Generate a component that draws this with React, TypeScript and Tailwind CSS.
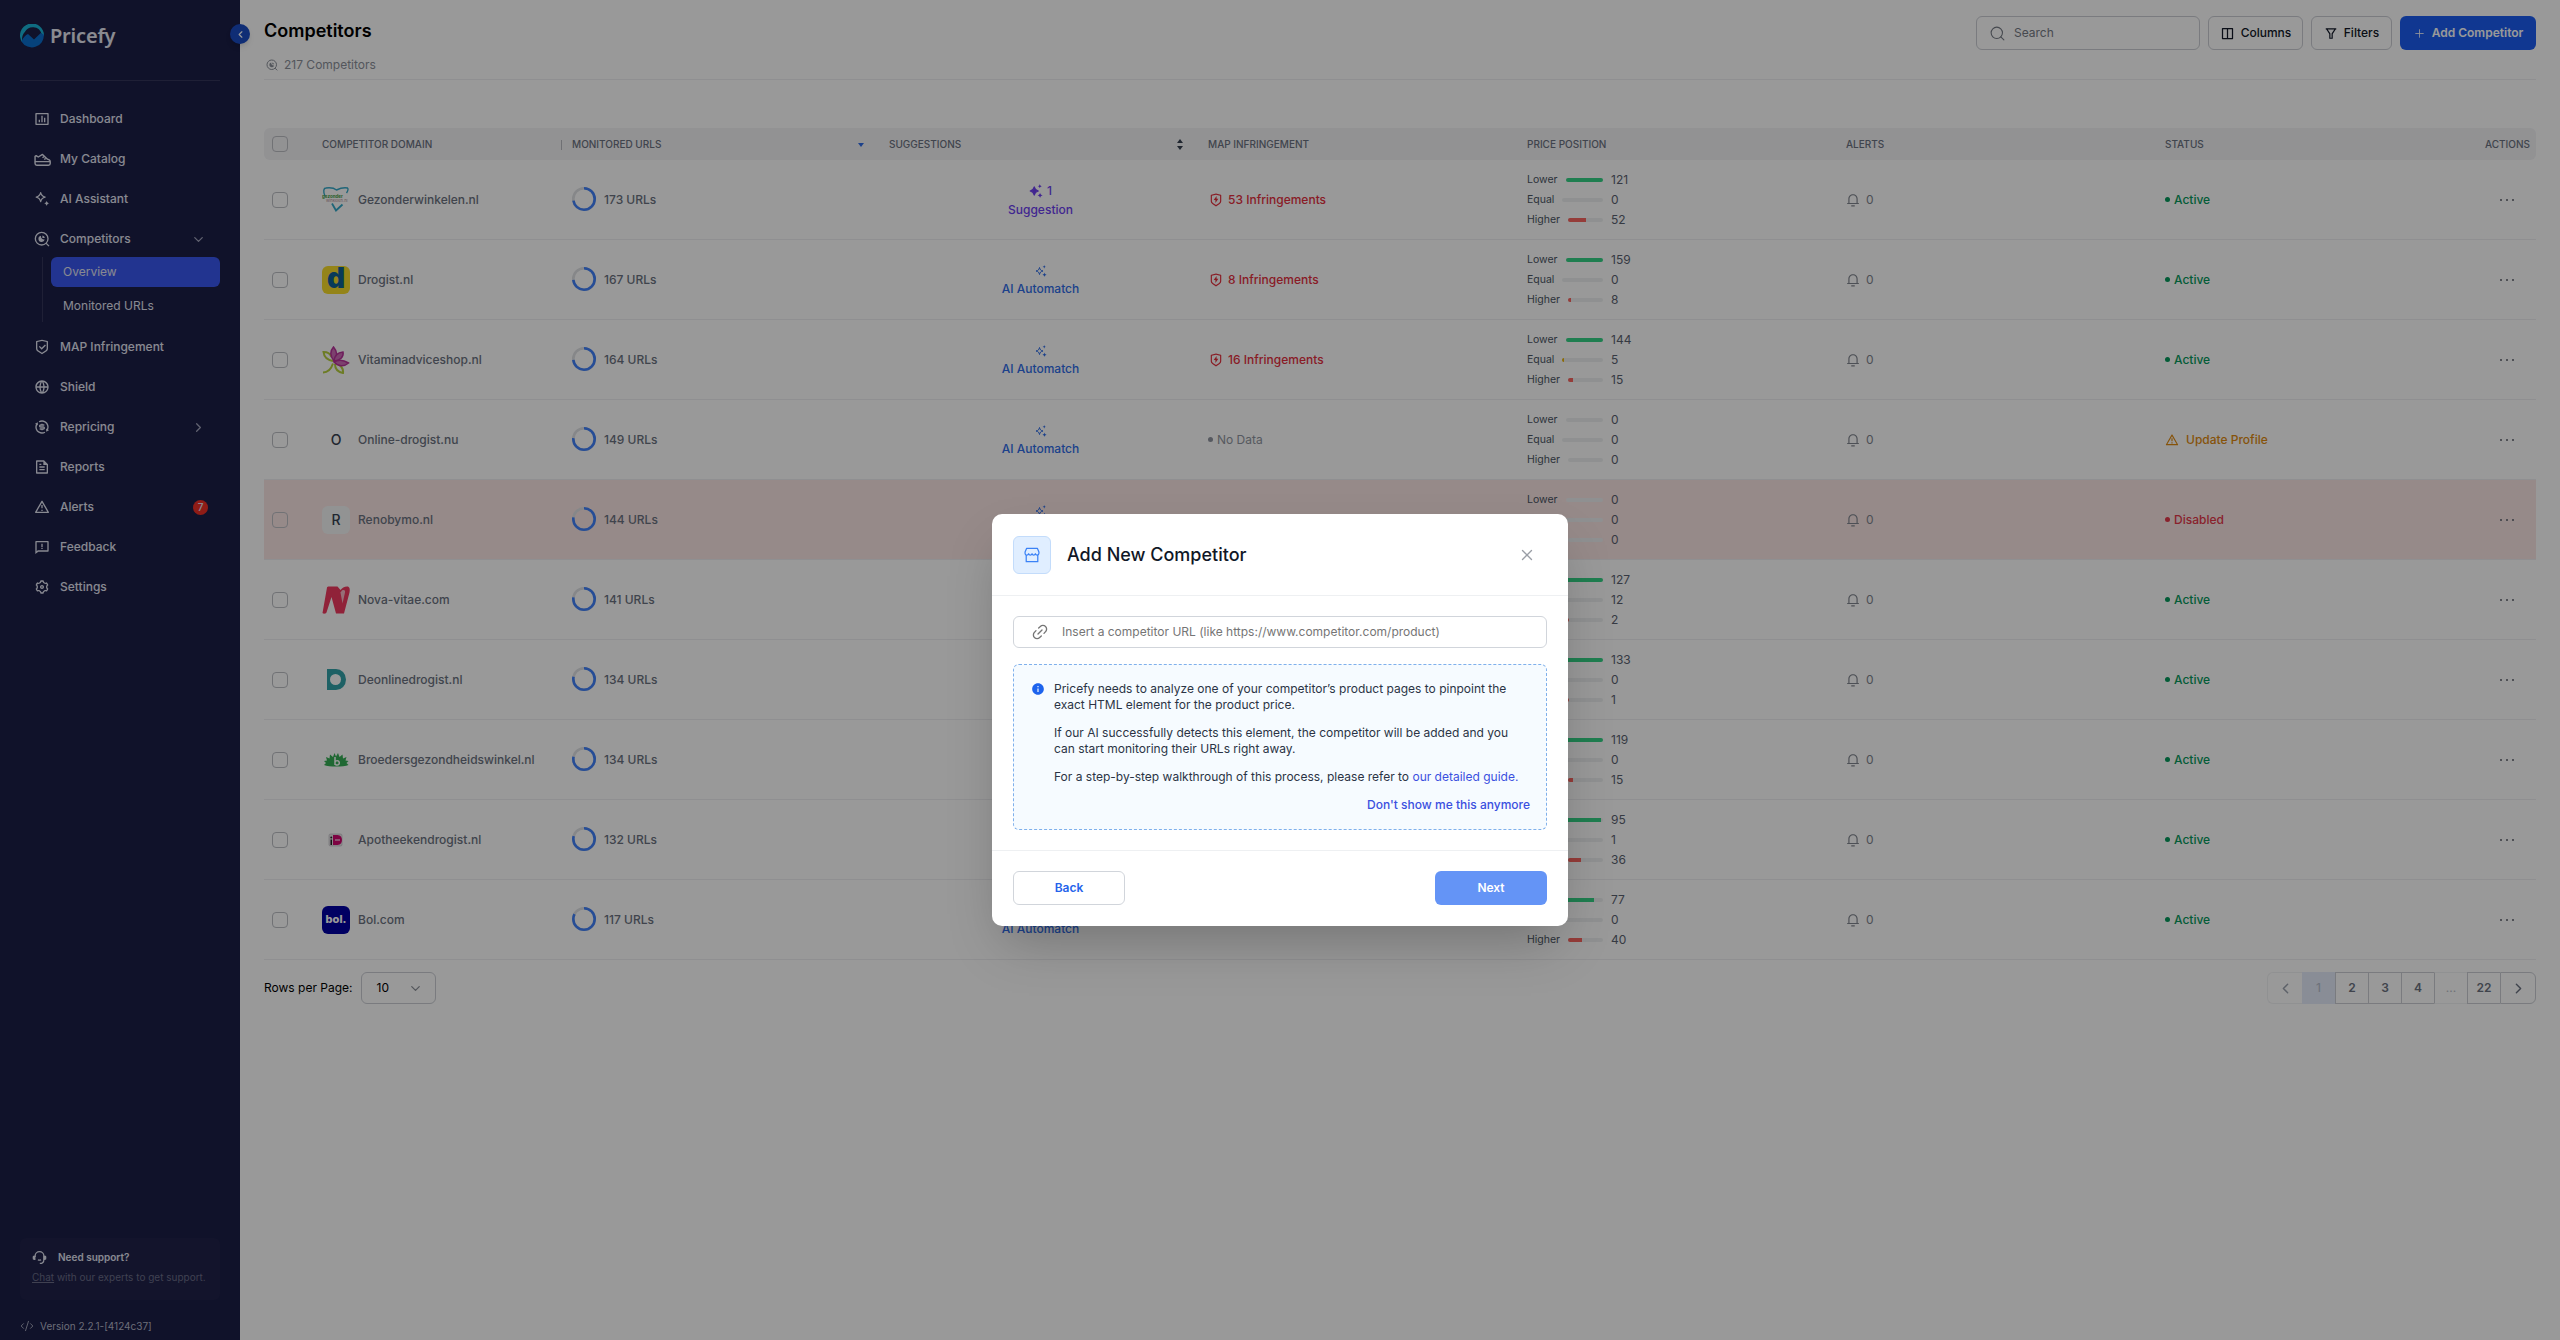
import type { ReactNode } from "react";
import {
  RiAlertLine,
  RiBarChartBoxLine,
  RiExchangeDollarLine,
  RiFeedbackLine,
  RiFileTextLine,
  RiFilterLine,
  RiGlobalLine,
  RiInformationFill,
  RiLayoutColumnLine,
  RiNotification3Line,
  RiSettings3Line,
  RiShieldCheckLine,
  RiShieldFlashLine,
} from "react-icons/ri";
import { ChevronDown, ChevronLeft, ChevronRight, CodeXml, Plus, Search, X } from "lucide-react";

function RadarIcon({ className }: { className?: string }) {
  return (
    <svg viewBox="0 0 24 24" fill="none" stroke="currentColor" strokeWidth="2" className={className}>
      <circle cx="11.5" cy="11.5" r="9.5" />
      <path d="M18 18.2l4.500 4.500" />
      <path d="M10.500 7a4.800 4.800 0 1 0 5.600 5.800 4.800 4.800 0 0 1-5.600-5.800z" fill="currentColor" stroke="none" />
      <path d="M12.600 6.800a4.800 4.800 0 0 1 3.700 3.700h-3.700z" fill="currentColor" stroke="none" />
    </svg>
  );
}

function ShoeIcon({ className }: { className?: string }) {
  return (
    <svg viewBox="0 0 24 24" fill="none" stroke="currentColor" strokeWidth="2" strokeLinejoin="round" className={className}>
      <path d="M1.500 15V7.500L3 6.500l3 2 6-3.700 7 6.700 2.500 1c1 .6 1.400 1.400 1.400 2.500z" />
      <path d="M1.500 15v2.500c0 1.600 1.200 2.500 2.500 2.500h16.400c1.500 0 2.500-1.200 2.500-2.500V15M12 9.500l2-1.500M14.500 12l2-1.500" />
    </svg>
  );
}

function SparkleIcon({ className }: { className?: string }) {
  return (
    <svg viewBox="0 0 24 24" fill="none" stroke="currentColor" strokeWidth="1.900" strokeLinejoin="round" className={className}>
      <path d="M10 2.500c.9 4 2.700 5.800 6.700 6.700-4 .9-5.800 2.700-6.700 6.700-.9-4-2.700-5.800-6.700-6.700 4-.9 5.800-2.700 6.700-6.700z" />
      <path d="M19 14.500c.5 2.300 1.700 3.500 4 4-2.300.5-3.500 1.700-4 4-.5-2.300-1.700-3.500-4-4 2.300-.5 3.500-1.700 4-4z" fill="currentColor" stroke="none" />
    </svg>
  );
}

function MatchIcon({ filled, className }: { filled?: boolean; className?: string }) {
  return (
    <svg viewBox="0 0 24 24" fill="currentColor" className={className}>
      <path
        d="M9 5c1 4.500 2.500 6 7 7-4.500 1-6 2.500-7 7-1-4.500-2.500-6-7-7 4.500-1 6-2.500 7-7z"
        fill={filled ? "currentColor" : "none"}
        stroke="currentColor"
        strokeWidth="2"
        strokeLinejoin="round"
      />
      <path d="M18.500 0c.5 2.500 1.200 3.200 3.700 3.700-2.500.5-3.200 1.200-3.700 3.700-.5-2.500-1.200-3.200-3.700-3.700 2.500-.5 3.200-1.200 3.700-3.700z" />
      <path d="M19 15c.6 2.800 1.700 3.900 4.500 4.500-2.800.6-3.900 1.700-4.500 4.500-.6-2.800-1.700-3.900-4.500-4.500 2.800-.6 3.900-1.700 4.500-4.500z" />
    </svg>
  );
}

function HeadsetIcon({ className }: { className?: string }) {
  return (
    <svg viewBox="0 0 24 24" fill="none" stroke="currentColor" strokeWidth="2" className={className}>
      <path d="M5 11V9.500a7 7 0 0 1 14 0V15c0 4-2.500 6.500-6.500 6.500M9.500 15.500c1.500 1 3.500 1 5 0" />
      <path d="M5.500 9v7H4a3 3 0 0 1-3-3.500A3 3 0 0 1 4 9zM18.500 9v7H20a3 3 0 0 0 3-3.500A3 3 0 0 0 20 9z" fill="currentColor" stroke="none" />
    </svg>
  );
}

function LinkIcon({ className }: { className?: string }) {
  return (
    <svg viewBox="0 0 24 24" fill="none" stroke="currentColor" strokeWidth="2" strokeLinecap="round" className={className}>
      <path d="M9 15l6-6M10 6l2.500-2.300a5.400 5.400 0 0 1 7.800 7.800L18 14M14 18l-2.500 2.300a5.400 5.400 0 0 1-7.800-7.800L6 10" />
    </svg>
  );
}

function StoreIcon({ className }: { className?: string }) {
  return (
    <svg viewBox="0 0 18 18" fill="none" stroke="currentColor" strokeWidth="1.400" strokeLinejoin="round" className={className}>
      <path d="M3 1.500h12l1.800 4.200v1.400c0 1.200-.9 2-2 2-1 0-1.700-.6-2-1.500-.3.900-1 1.500-1.900 1.500s-1.600-.6-1.900-1.500c-.3.900-1 1.500-1.900 1.500s-1.600-.6-1.900-1.500c-.3.900-1 1.500-2 1.500-1.100 0-2-.8-2-2V5.700z" />
      <path d="M2.500 9v7.500h13V9" />
    </svg>
  );
}

function Logo() {
  return (
    <div className="flex h-6 items-center gap-1.5">
      <svg viewBox="0 0 24 24" className="size-6">
        <path d="M2.300 18.500A12 12 0 1 1 24 12l-2.500-2.500a9.200 9.200 0 0 0-16.700-1.500C2.500 10.500 1.500 14 2.300 18.500z" fill="#19b5d8" />
        <path d="M1.500 17.500C3 13.500 5.500 11 8 10l6 5.500L20.800 9l3 1.500A12 12 0 0 1 1.500 17.500z" fill="#0b6fce" />
      </svg>
      <span className="font-['Noto_Sans'] text-[20px] leading-6 font-semibold tracking-[-0.2px] text-[#e6e8f2]">Pricefy</span>
    </div>
  );
}

type NavProps = { icon: ReactNode; label: string; right?: ReactNode };

function NavItem({ icon, label, right }: NavProps) {
  return (
    <div className="flex h-10 items-center pr-3.5 pl-[14px]">
      <span className="flex w-[26px] items-center text-[16px]">{icon}</span>
      <span>{label}</span>
      <span className="ml-auto flex items-center">{right}</span>
    </div>
  );
}

function Sidebar() {
  return (
    <aside className="relative flex w-60 shrink-0 flex-col bg-[#1b1e46] px-5 text-[12px] font-[450] text-[#e3e5f2]">
      <div className="h-[81px] border-b border-[#34365a] pt-6">
        <Logo />
      </div>
      <div className="absolute top-6 -right-2.5 flex size-5 items-center justify-center rounded-full bg-[#1a4bc4] text-white shadow-md">
        <ChevronLeft size={11} strokeWidth={2.5} />
      </div>
      <nav className="mt-[18px]">
        <NavItem icon={<RiBarChartBoxLine />} label="Dashboard" />
        <NavItem icon={<ShoeIcon className="size-[17px]" />} label="My Catalog" />
        <NavItem icon={<SparkleIcon className="size-[16px]" />} label="AI Assistant" />
        <NavItem
          icon={<RadarIcon className="size-[16px]" />}
          label="Competitors"
          right={<ChevronDown size={15} className="text-[#a3a5bd]" />}
        />
        <div className="-mt-0.5 mb-[5px] ml-[22px] h-[65px] border-l border-[#34365a] pl-2">
          <div className="flex h-[30px] items-center rounded-md bg-[#3a58f0] px-3 font-normal">Overview</div>
          <div className="mt-1 flex h-[30px] items-center px-3 font-normal">Monitored URLs</div>
        </div>
        <NavItem icon={<RiShieldCheckLine />} label="MAP Infringement" />
        <NavItem icon={<RiGlobalLine />} label="Shield" />
        <NavItem
          icon={<RiExchangeDollarLine />}
          label="Repricing"
          right={<ChevronRight size={15} className="text-[#a3a5bd]" />}
        />
        <NavItem icon={<RiFileTextLine />} label="Reports" />
        <NavItem
          icon={<RiAlertLine />}
          label="Alerts"
          right={
            <span className="-mr-0.5 flex size-[15px] items-center justify-center rounded-full bg-[#ee2f26] text-[10px]">7</span>
          }
        />
        <NavItem icon={<RiFeedbackLine />} label="Feedback" />
        <NavItem icon={<RiSettings3Line />} label="Settings" />
      </nav>
      <div className="mt-auto mb-[18px] h-[62px] rounded-md bg-[#20224a] px-3 pt-[11px]">
        <div className="flex items-center text-[10px] leading-4 font-semibold">
          <HeadsetIcon className="mr-[11px] size-[15px]" />
          Need support?
        </div>
        <div className="mt-1 text-[10px] leading-4 font-normal whitespace-nowrap text-[#6b6d88]">
          <span className="underline">Chat</span> with our experts to get support.
        </div>
      </div>
      <div className="mb-1.5 flex h-4 items-center gap-1.5 text-[10px] font-normal text-[#b4b6c8]">
        <CodeXml size={14} strokeWidth={1.5} />
        Version 2.2.1-[4124c37]
      </div>
    </aside>
  );
}

const favicons: Record<string, ReactNode> = {
  "Gezonderwinkelen.nl": (
    <svg viewBox="0 0 28 28" className="size-7">
      <path d="M3 10C1 6 1.500 2 4 2c4-.5 7.500-.5 10.500 2 4-2 8-2.500 11-2 1 1 0 3.500-1 5" fill="none" stroke="#35a9c9" strokeWidth="1.400" />
      <path d="M10 17.500l4 7 6.500-6" fill="none" stroke="#35a9c9" strokeWidth="1.800" />
      <text x="0" y="11.500" fontSize="4.500" fontWeight="700" fill="#3f9c45" fontFamily="Inter">gezonder</text>
      <text x="4" y="15.500" fontSize="4" fill="#c0a0a6" fontFamily="Inter">winkelen.nl</text>
    </svg>
  ),
  "Drogist.nl": (
    <div className="flex size-7 items-center justify-center rounded-md bg-[#f7dc2a] font-['Inter'] text-[28px] leading-none font-black text-[#0f6195]">
      <span className="-mt-1">d</span>
    </div>
  ),
  "Vitaminadviceshop.nl": (
    <svg viewBox="0 0 28 28" className="size-7">
      <g fill="none" stroke="#b6cf3e" strokeWidth="2">
        <path d="M11 15C5 14 2 11 1.500 6c4 0 7 2 8 5" />
        <path d="M1 26.500c5 0 8-3 10-9M13 18c0 5 3 8 8 9 .5-4-1-7-6-9.500" />
      </g>
      <g fill="#cf6db8" stroke="#b8329a" strokeWidth="1.500">
        <path d="M12 15C8 10 8 5 11.500 1 15 5 16 10 12 15z" />
        <path d="M12 15c.5-5 4-8.500 9-9C22 11 18 14.500 12 15z" />
        <path d="M12 16c4-2.500 9-2.500 14.500 1C22 21 16 20.500 12 16z" />
      </g>
    </svg>
  ),
  "Online-drogist.nu": (
    <div className="flex size-7 items-center justify-center rounded-md text-[14px] text-[#374151]">O</div>
  ),
  "Renobymo.nl": (
    <div className="flex size-7 items-center justify-center rounded-md bg-[#f3f6f6] text-[14px] text-[#374151]">R</div>
  ),
  "Nova-vitae.com": (
    <svg viewBox="0 0 28 28" className="size-7">
      <path d="M.5 27L5 1.500C5.300.5 6 .5 7 .5h8.500l3 3.500C20 2 23 0 26 .5c2 1 2 3 1.500 6L22 27.500h-8L9.500 11 4.500 26.500c-1 1.500-3 1.500-4 .5z" fill="#f03a5f" />
      <path d="M18.500 6.500l1.500-2c1.500-1 3.500-.5 3 2l-2.500 11z" fill="#fff" opacity=".65" />
    </svg>
  ),
  "Deonlinedrogist.nl": (
    <svg viewBox="0 0 28 28" className="size-7">
      <path d="M5 3h9a10 10.500 0 0 1 0 21H5z" fill="#33a2a8" />
      <circle cx="13.500" cy="13.500" r="5.500" fill="#fff" />
    </svg>
  ),
  "Broedersgezondheidswinkel.nl": (
    <svg viewBox="0 0 28 28" className="size-7">
      <path
        d="M2 19l2-2-2-2 3-.500-1-3.500 3.500 1.500.5-4 3 2.500L12.500 7l1.500 3.500L16 7l1.500 4 3-2.500.5 4 3.500-1.500-1 3.500 3 .5-2 2 2 2c-5 2-19.500 2-24.500 0z"
        fill="#36ae55"
      />
      <path d="M13 11v8M13 16.200a2.200 2.200 0 1 1 .5 2.200" fill="none" stroke="#fff" strokeWidth="1.500" />
    </svg>
  ),
  "Apotheekendrogist.nl": (
    <svg viewBox="0 0 28 28" className="size-7">
      <rect x="7" y="8" width="13" height="12" rx="1.500" fill="#e9e4e8" stroke="#b9b9c0" strokeWidth=".6" />
      <path d="M11 9h4.500c6 0 6 10 0 10H11z" fill="#d1066f" />
      <path d="M8.500 13.500h1.500V19H8.500z" fill="#222" />
      <circle cx="9.250" cy="11.500" r="1" fill="#222" />
      <path d="M13 14h5" stroke="#f7bcdb" strokeWidth="1.400" />
    </svg>
  ),
  "Bol.com": (
    <div className="flex size-7 items-center justify-center rounded-md bg-[#0000a4] text-[11px] font-extrabold text-white">
      bol.
    </div>
  ),
};

type Row = {
  domain: string;
  urls: number;
  ring: number;
  infringement: number;
  price: [number, number, number];
  status: "Active" | "Disabled" | "Update Profile";
  suggestion?: boolean;
};

const rows: Row[] = [
  { domain: "Gezonderwinkelen.nl", urls: 173, ring: 0.72, infringement: 53, price: [121, 0, 52], status: "Active", suggestion: true },
  { domain: "Drogist.nl", urls: 167, ring: 0.73, infringement: 8, price: [159, 0, 8], status: "Active" },
  { domain: "Vitaminadviceshop.nl", urls: 164, ring: 0.73, infringement: 16, price: [144, 5, 15], status: "Active" },
  { domain: "Online-drogist.nu", urls: 149, ring: 0.76, infringement: 0, price: [0, 0, 0], status: "Update Profile" },
  { domain: "Renobymo.nl", urls: 144, ring: 0.77, infringement: 0, price: [0, 0, 0], status: "Disabled" },
  { domain: "Nova-vitae.com", urls: 141, ring: 0.77, infringement: 0, price: [127, 12, 2], status: "Active" },
  { domain: "Deonlinedrogist.nl", urls: 134, ring: 0.78, infringement: 0, price: [133, 0, 1], status: "Active" },
  { domain: "Broedersgezondheidswinkel.nl", urls: 134, ring: 0.78, infringement: 0, price: [119, 0, 15], status: "Active" },
  { domain: "Apotheekendrogist.nl", urls: 132, ring: 0.79, infringement: 0, price: [95, 1, 36], status: "Active" },
  { domain: "Bol.com", urls: 117, ring: 0.82, infringement: 0, price: [77, 0, 40], status: "Active" },
];

const grid = "grid grid-cols-[42px_250px_317px_319px_319px_319px_319px_319px_68px] items-center";

function Checkbox() {
  return <div className="ml-2 size-4 rounded border border-[#bcbec4]" />;
}

function Ring({ value }: { value: number }) {
  const c = 2 * Math.PI * 10.7;
  return (
    <svg viewBox="0 0 24 24" className="-mt-0.5 size-6 -rotate-90">
      <circle cx="12" cy="12" r="10.7" fill="none" stroke="#dfe1e4" strokeWidth="2.6" />
      <circle cx="12" cy="12" r="10.7" fill="none" stroke="#4080fa" strokeWidth="2.6" strokeDasharray={`${c * value} ${c}`} />
    </svg>
  );
}

function PriceLine({ label, value, color }: { label: string; value: number; color: string }) {
  return (
    <div className="flex h-5 items-center gap-2">
      <div className="flex w-[76px] items-center gap-2">
        <span className="text-[10.5px] text-[#4b5563]">{label}</span>
        <div className="h-1 flex-1 overflow-hidden rounded-full bg-[#eff1f2]">
          <div className={`h-1 ${color}`} style={{ width: `${Math.min(value, 100)}%` }} />
        </div>
      </div>
      <span className="text-[#5b6270]">{value}</span>
    </div>
  );
}

function Status({ status }: { status: Row["status"] }) {
  if (status === "Update Profile") {
    return (
      <div className="flex items-center pl-4 font-[450] text-[#e08a10]">
        <RiAlertLine className="mr-[7px] size-[14px]" />
        {status}
      </div>
    );
  }
  return (
    <div className={`flex items-center gap-1 pl-4 ${status === "Active" ? "text-[#059a5c]" : "text-[#e5384a]"}`}>
      <span className="size-[5px] rounded-full bg-current" />
      {status}
    </div>
  );
}

function TableRow({ row }: { row: Row }) {
  return (
    <div
      className={`${grid} h-20 border-b border-[#eeeff2] text-[#6b7280] ${row.status === "Disabled" ? "bg-[#fae6e5]" : ""}`}
    >
      <Checkbox />
      <div className="flex items-center gap-2 pl-4">
        {favicons[row.domain]}
        {row.domain}
      </div>
      <div className="flex items-center gap-2 pl-4">
        <Ring value={row.ring} />
        {row.urls} URLs
      </div>
      {row.suggestion ? (
        <div className="flex flex-col items-center gap-[3px] pt-0.5 pl-4 leading-4 font-[450] text-[#6d3ff0]">
          <span className="flex items-center gap-1">
            <MatchIcon filled className="size-[14px]" />1
          </span>
          <span>Suggestion</span>
        </div>
      ) : (
        <div className="flex flex-col items-center gap-1 pt-0.5 pl-4 leading-4 font-[450] text-[#2f6de8]">
          <MatchIcon className="size-3" />
          <span>AI Automatch</span>
        </div>
      )}
      {row.infringement ? (
        <div className="flex items-center pl-[17px] font-[450] text-[#e5303f]">
          <RiShieldFlashLine className="mr-[5px] size-[14px]" />
          {row.infringement} Infringements
        </div>
      ) : (
        <div className="flex items-center gap-1 pl-4 font-normal text-[#9095a0]">
          <span className="size-[5px] rounded-full bg-current" />
          No Data
        </div>
      )}
      <div className="pl-4 font-normal">
        <PriceLine label="Lower" value={row.price[0]} color="bg-[#34d385]" />
        <PriceLine label="Equal" value={row.price[1]} color="bg-[#eab308]" />
        <PriceLine label="Higher" value={row.price[2]} color="bg-[#f8655f]" />
      </div>
      <div className="flex items-center gap-1.5 pl-4 font-normal text-[#81868f]">
        <RiNotification3Line className="size-[14px]" />0
      </div>
      <Status status={row.status} />
      <div className="flex gap-1 pl-[32px]">
        <span className="size-[2px] rounded-full bg-[#5b606b]" />
        <span className="size-[2px] rounded-full bg-[#5b606b]" />
        <span className="size-[2px] rounded-full bg-[#5b606b]" />
      </div>
    </div>
  );
}

function TableHead() {
  return (
    <div className={`${grid} h-8 rounded-md bg-[#f3f3f6] text-[10px] font-medium text-[#6b7280]`}>
      <Checkbox />
      <div className="flex items-center justify-between pt-px pl-4">
        COMPETITOR DOMAIN
        <span className="-mr-1.5 h-2.5 w-px bg-[#b9bbc2]" />
      </div>
      <div className="flex items-center justify-between pt-px pr-[9px] pl-4">
        MONITORED URLS
        <span className="border-x-[3px] border-t-4 border-x-transparent border-t-[#2f6de8]" />
      </div>
      <div className="flex items-center justify-between pt-px pr-[9px] pl-4">
        SUGGESTIONS
        <span className="flex flex-col gap-[3px]">
          <span className="border-x-[3px] border-b-4 border-x-transparent border-b-[#374151]" />
          <span className="border-x-[3px] border-t-4 border-x-transparent border-t-[#374151]" />
        </span>
      </div>
      <div className="pt-px pl-4">MAP INFRINGEMENT</div>
      <div className="pt-px pl-4">PRICE POSITION</div>
      <div className="pt-px pl-4">ALERTS</div>
      <div className="pt-px pl-4">STATUS</div>
      <div className="pt-px pr-1.5 text-right">ACTIONS</div>
    </div>
  );
}

function Pagination() {
  return (
    <div className="flex h-8 text-[12px] font-semibold text-[#6b7280]">
      <div className="flex w-[35px] items-center justify-center rounded-l-md border border-r-0 border-[#f1f2f4]">
        <ChevronLeft size={17} className="text-[#9ca3af]" />
      </div>
      <div className="flex w-[33px] items-center justify-center bg-[#e5ecfa] font-medium text-[#b7bfcf]">1</div>
      {[2, 3, 4].map((p) => (
        <div key={p} className="flex w-[33px] items-center justify-center border border-r-0 border-[#cbced4]">
          {p}
        </div>
      ))}
      <div className="flex w-[33px] items-center justify-center border-y border-l border-y-[#f1f2f4] border-l-[#cbced4] font-normal text-[#b9bdc6]">
        ...
      </div>
      <div className="flex w-[33px] items-center justify-center border border-r-0 border-[#cbced4]">22</div>
      <div className="flex w-9 items-center justify-center rounded-r-md border border-[#cbced4]">
        <ChevronRight size={17} />
      </div>
    </div>
  );
}

function Modal() {
  return (
    <div className="flex h-[412px] w-[576px] flex-col rounded-[10px] bg-white shadow-2xl">
      <div className="flex h-[82px] items-center border-b border-[#eef0f2] px-[21px]">
        <div className="flex size-[38px] items-center justify-center rounded-md border border-[#c3dcfb] bg-[#e0eeff] text-[#3b82f6]">
          <StoreIcon className="size-4" />
        </div>
        <h2 className="ml-4 text-[18px] font-[550] text-[#111827]">Add New Competitor</h2>
        <X size={18} strokeWidth={1.8} className="mr-[11px] ml-auto text-[#9a9ea6]" />
      </div>
      <div className="px-[21px] py-5">
        <div className="flex h-8 items-center rounded-md border border-[#d1d5db] pl-[18px] text-[12px] text-[#757575]">
          <LinkIcon className="mr-[14px] size-4" />
          Insert a competitor URL (like https://www.competitor.com/product)
        </div>
        <div className="mt-4 flex h-[166px] rounded-md border border-dashed border-[#7fb0ec] bg-[#f6fbff] py-4 pr-4 pl-[17px] text-[12px] leading-4 text-[#2b3445]">
          <RiInformationFill size={14} className="mt-px mr-[9px] shrink-0 text-[#1d63ed]" />
          <div className="flex flex-1 flex-col gap-3">
            <p>
              Pricefy needs to analyze one of your competitor’s product pages to pinpoint the
              <br />
              exact HTML element for the product price.
            </p>
            <p>
              If our AI successfully detects this element, the competitor will be added and you
              <br />
              can start monitoring their URLs right away.
            </p>
            <p>
              For a step-by-step walkthrough of this process, please refer to{" "}
              <span className="text-[#3b50e0]">our detailed guide.</span>
            </p>
            <p className="text-right font-[550] text-[#3b50e0]">Don't show me this anymore</p>
          </div>
        </div>
      </div>
      <div className="flex flex-1 items-center justify-between border-t border-[#eef0f2] px-[21px] pb-0.5 text-[12px] font-semibold">
        <button className="h-[34px] w-28 rounded-md border border-[#d1d5db] text-[#2563eb]">Back</button>
        <button className="h-[34px] w-28 rounded-md bg-[#6494f6] text-white">Next</button>
      </div>
    </div>
  );
}

export default function App() {
  return (
    <div className="relative h-[1340px] w-[2560px] overflow-hidden bg-white font-['Inter',sans-serif]">
      <div className="flex h-full">
        <Sidebar />
        <main className="flex-1 px-6 text-[12px] font-medium">
          <header className="flex h-20 justify-between border-b border-[#eeeff2] pt-4">
            <div>
              <h1 className="text-[18px] leading-[30px] font-[580] text-black">Competitors</h1>
              <div className="mt-[11px] flex items-center gap-1.5 pl-0.5 leading-4 font-normal text-[#8b9099]">
                <RadarIcon className="size-3" />
                217 Competitors
              </div>
            </div>
            <div className="flex h-[34px] gap-2 text-[#111827]">
              <div className="flex w-[224px] items-center gap-2 rounded-md border border-[#cbced4] pl-3 font-normal text-[#757a84]">
                <Search size={17} strokeWidth={1.5} />
                Search
              </div>
              <div className="flex w-[95px] items-center justify-center gap-1.5 rounded-md border border-[#cbced4]">
                <RiLayoutColumnLine size={15} />
                Columns
              </div>
              <div className="flex w-[81px] items-center justify-center gap-1.5 rounded-md border border-[#cbced4]">
                <RiFilterLine size={14} />
                Filters
              </div>
              <div className="flex w-[136px] items-center justify-center gap-1.5 rounded-md bg-[#1b5df2] font-semibold text-white">
                <Plus size={13} strokeWidth={1.5} />
                Add Competitor
              </div>
            </div>
          </header>
          <div className="mt-12">
            <TableHead />
            {rows.map((row) => (
              <TableRow key={row.domain} row={row} />
            ))}
          </div>
          <div className="mt-3 flex items-center justify-between">
            <div className="flex items-center gap-2 font-normal text-black">
              Rows per Page:
              <div className="flex h-8 w-[75px] items-center justify-between rounded-md border border-[#cbced4] pr-3 pl-[15px]">
                10
                <ChevronDown size={15} className="text-[#8b9099]" />
              </div>
            </div>
            <Pagination />
          </div>
        </main>
      </div>
      <div className="absolute inset-0 flex justify-center bg-black/40 pt-[514px]">
        <Modal />
      </div>
    </div>
  );
}
